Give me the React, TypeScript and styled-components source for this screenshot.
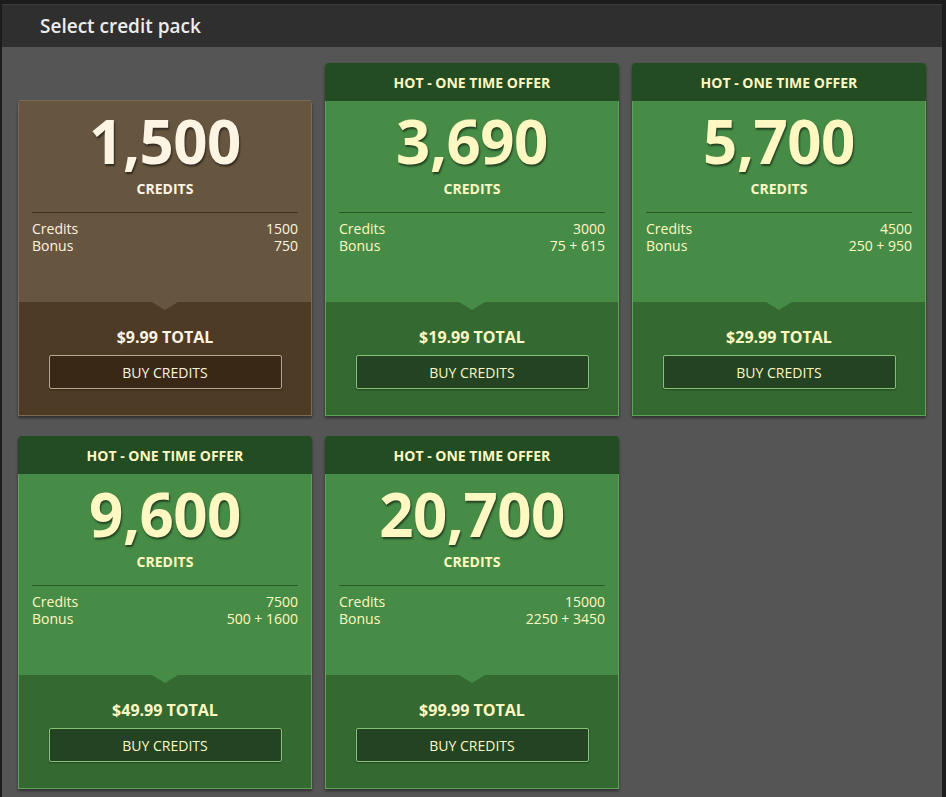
import React from "react";
import styled, { createGlobalStyle } from "styled-components";

const Global = createGlobalStyle`
  html, body { margin: 0; padding: 0; background: #1c1c1c; }
  body { font-family: "Open Sans", "Noto Sans", sans-serif; width: 946px; height: 797px; overflow: hidden; }
`;

type Tone = "brown" | "green";

const palette = {
  brown: {
    top: "#67563f",
    bottom: "#4d3b25",
    divider: "#3e3121",
    text: "#fdf4e3",
    btnBg: "#3a2816",
    btnBorder: "#b9a98c",
    border: "#7c6b53",
  },
  green: {
    top: "#468c46",
    bottom: "#346a32",
    divider: "#2a5629",
    text: "#fff8c2",
    btnBg: "#234322",
    btnBorder: "#86c276",
    border: "#5da35a",
  },
};

const Window = styled.div`
  margin: 4px 0 0 2px;
  width: 940px;
  height: 793px;
  background: #555555;
  display: flex;
  flex-direction: column;
`;

const TitleBar = styled.div`
  height: 42px;
  background: #2f2f2f;
  border-top: 1px solid #3a3a3a;
  display: flex;
  align-items: center;
  padding-left: 38px;
  color: #ececec;
  font-size: 19px;
  font-weight: 600;
`;

const Grid = styled.div`
  display: grid;
  grid-template-columns: repeat(3, 294px);
  column-gap: 13px;
  row-gap: 20px;
  padding: 16px 0 0 16px;
  align-items: end;
`;

const Card = styled.div<{ $tone: Tone }>`
  display: flex;
  flex-direction: column;
  border: 1px solid ${(p) => palette[p.$tone].border};
  border-top: none;
  border-radius: 3px 3px 0 0;
  box-shadow: 0 2px 3px rgba(0, 0, 0, 0.45);
  color: ${(p) => palette[p.$tone].text};
`;

const Ribbon = styled.div`
  height: 38px;
  background: #244c23;
  border-radius: 3px 3px 0 0;
  display: flex;
  align-items: center;
  justify-content: center;
  font-size: 14px;
  font-weight: 700;
  margin: 0 -1px;
`;

const Upper = styled.div<{ $tone: Tone; $plain?: boolean }>`
  background: ${(p) => palette[p.$tone].top};
  padding: 10px 13px 48px;
  display: flex;
  flex-direction: column;
  align-items: stretch;
  border-top: ${(p) => (p.$plain ? `1px solid ${palette[p.$tone].border}` : "none")};
  margin-top: ${(p) => (p.$plain ? "-1px" : "0")};
`;

const Amount = styled.div`
  font-size: 60px;
  line-height: 60px;
  font-weight: 700;
  text-align: center;
  letter-spacing: -0.5px;
  text-shadow: 1px 2px 2px rgba(0, 0, 0, 0.55);
`;

const Unit = styled.div`
  margin-top: 9px;
  font-size: 14px;
  line-height: 17px;
  font-weight: 700;
  text-align: center;
`;

const Divider = styled.div<{ $tone: Tone }>`
  height: 1px;
  margin: 15px 0 7px;
  background: ${(p) => palette[p.$tone].divider};
`;

const Row = styled.div`
  display: flex;
  justify-content: space-between;
  font-size: 14px;
  line-height: 17px;
`;

const Lower = styled.div<{ $tone: Tone }>`
  position: relative;
  background: ${(p) => palette[p.$tone].bottom};
  padding: 25px 0 26px;
  display: flex;
  flex-direction: column;
  align-items: center;
  &::before {
    content: "";
    position: absolute;
    top: 0;
    left: 50%;
    transform: translateX(-50%);
    border-left: 13px solid transparent;
    border-right: 13px solid transparent;
    border-top: 8px solid ${(p) => palette[p.$tone].top};
  }
`;

const Price = styled.div`
  font-size: 16px;
  line-height: 20px;
  font-weight: 700;
`;

const BuyButton = styled.button<{ $tone: Tone }>`
  margin-top: 8px;
  width: 233px;
  height: 34px;
  background: ${(p) => palette[p.$tone].btnBg};
  border: 1px solid ${(p) => palette[p.$tone].btnBorder};
  border-radius: 2px;
  color: inherit;
  font-family: "Open Sans", "Noto Sans", sans-serif;
  font-size: 14px;
  cursor: pointer;
  box-shadow: 0 1px 2px rgba(0, 0, 0, 0.35);
`;

type Pack = {
  amount: string;
  credits: string;
  bonus: string;
  price: string;
  hot: boolean;
};

const packs: Pack[] = [
  { amount: "1,500", credits: "1500", bonus: "750", price: "$9.99", hot: false },
  { amount: "3,690", credits: "3000", bonus: "75 + 615", price: "$19.99", hot: true },
  { amount: "5,700", credits: "4500", bonus: "250 + 950", price: "$29.99", hot: true },
  { amount: "9,600", credits: "7500", bonus: "500 + 1600", price: "$49.99", hot: true },
  { amount: "20,700", credits: "15000", bonus: "2250 + 3450", price: "$99.99", hot: true },
];

function PackCard({ pack }: { pack: Pack }) {
  const tone: Tone = pack.hot ? "green" : "brown";
  return (
    <Card $tone={tone}>
      {pack.hot && <Ribbon>HOT - ONE TIME OFFER</Ribbon>}
      <Upper $tone={tone} $plain={!pack.hot}>
        <Amount>{pack.amount}</Amount>
        <Unit>CREDITS</Unit>
        <Divider $tone={tone} />
        <Row>
          <span>Credits</span>
          <span>{pack.credits}</span>
        </Row>
        <Row>
          <span>Bonus</span>
          <span>{pack.bonus}</span>
        </Row>
      </Upper>
      <Lower $tone={tone}>
        <Price>{pack.price} TOTAL</Price>
        <BuyButton $tone={tone}>BUY CREDITS</BuyButton>
      </Lower>
    </Card>
  );
}

export default function App() {
  return (
    <>
      <Global />
      <Window>
        <TitleBar>Select credit pack</TitleBar>
        <Grid>
          {packs.map((p) => (
            <PackCard key={p.amount} pack={p} />
          ))}
        </Grid>
      </Window>
    </>
  );
}
